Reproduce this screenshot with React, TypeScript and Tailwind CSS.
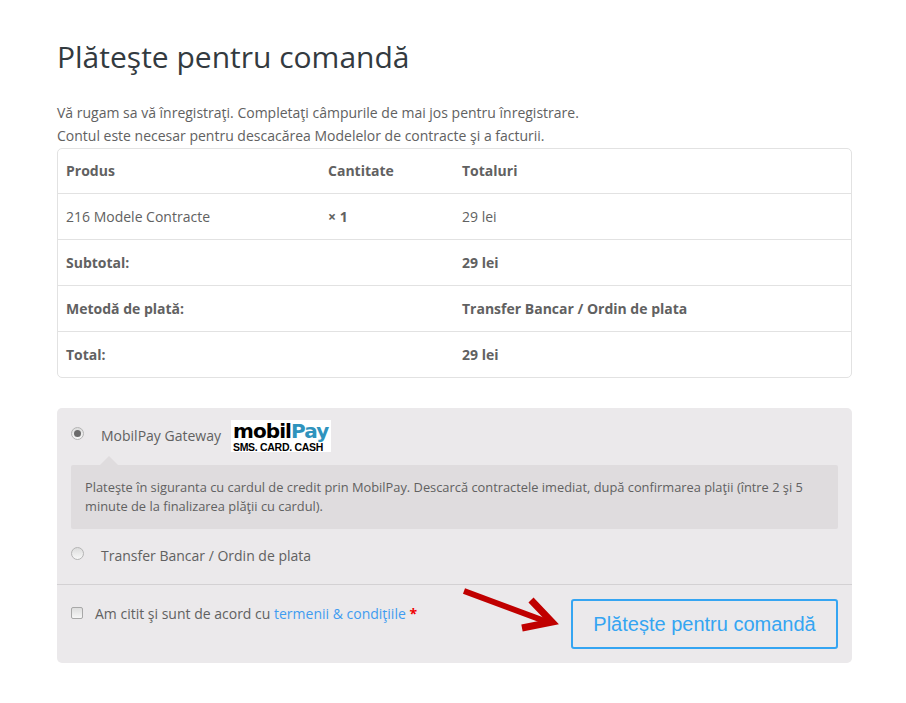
const rows = [
  { first: "Produs", second: "Cantitate", third: "Totaluri", bold: true, secondBold: true },
  { first: "216 Modele Contracte", second: "× 1", third: "29 lei", bold: false, secondBold: true },
  { first: "Subtotal:", second: "", third: "29 lei", bold: true, secondBold: false },
  { first: "Metodă de plată:", second: "", third: "Transfer Bancar / Ordin de plata", bold: true, secondBold: false },
  { first: "Total:", second: "", third: "29 lei", bold: true, secondBold: false }
];

const Radio = ({ checked }: { checked?: boolean }) => (
  <span className="mb-[4px] flex h-[13px] w-[13px] items-center justify-center rounded-full border border-[#b4b4b4] bg-gradient-to-b from-[#dcdcdc] to-[#f8f8f8]">
    {checked ? <span className="h-[7px] w-[7px] rounded-full bg-[#6b6b6b]" /> : null}
  </span>
);

const MobilPayLogo = () => (
  <div className="flex h-[32px] w-[100px] flex-col bg-white pl-[2px] font-bold">
    <div className="h-[22px] font-['DejaVu_Sans',sans-serif] text-[20px] leading-[22px] tracking-[-0.9px]">
      <span className="text-black">mobil</span>
      <span className="text-[#2f93bd]">Pay</span>
    </div>
    <div className="font-['Liberation_Sans',Arial,sans-serif] text-[10.5px] leading-[10px] tracking-[-0.3px] text-black">SMS. CARD. CASH</div>
  </div>
);

export default function App() {
  return (
    <div className="min-h-[703px] bg-white pl-[57px] pr-[54px] pt-[37px] font-['Open_Sans',sans-serif] text-[14px] text-[#616161]">
      <h1 className="h-[40px] text-[30px] leading-[40px] text-[#333a40]">Plăteşte pentru comandă</h1>
      <div className="mt-[24px] leading-[23px]">
        <p>Vă rugam sa vă înregistraţi. Completaţi câmpurile de mai jos pentru înregistrare.</p>
        <p>Contul este necesar pentru descacărea Modelelor de contracte şi a facturii.</p>
      </div>

      <div className="mt-[1px] rounded-[5px] border border-[#e2e2e2]">
        {rows.map((row, index) => (
          <div
            key={row.first}
            className={`grid grid-cols-[262px_134px_1fr] items-center pl-[8px] ${index > 0 ? "h-[46px] border-t border-[#e2e2e2]" : "h-[44px] pb-[2px]"}`}
          >
            <div className={row.bold ? "font-bold" : ""}>{row.first}</div>
            <div className={row.secondBold ? "font-bold" : ""}>{row.second}</div>
            <div className={row.bold ? "font-bold" : ""}>{row.third}</div>
          </div>
        ))}
      </div>

      <div className="mt-[30px] h-[255px] rounded-[5px] bg-[#ebe9eb]">
        <div className="flex h-[57px] items-center pb-[2px] pl-[14px]">
          <Radio checked />
          <span className="ml-[17px]">MobilPay Gateway</span>
          <div className="ml-[10px]">
            <MobilPayLogo />
          </div>
        </div>
        <div className="relative mx-[14px] h-[64px] rounded-[2px] bg-[#dfdcde] px-[14px] pt-[13px] text-[12.85px] leading-[19px]">
          <span className="absolute left-[29px] top-[-9px] h-0 w-0 border-x-[9px] border-b-[9px] border-x-transparent border-b-[#dfdcde]" />
          Plateşte în siguranta cu cardul de credit prin MobilPay. Descarcă contractele imediat, după confirmarea plaţii (între 2 şi 5 minute de la finalizarea plăţii cu cardul).
        </div>
        <div className="flex h-[55px] items-center pb-[3px] pl-[14px]">
          <Radio />
          <span className="ml-[17px]">Transfer Bancar / Ordin de plata</span>
        </div>
        <div className="relative flex border-t border-[#d3d1d3] pl-[14px] pr-[14px] pt-[14px]">
          <div className="flex h-[28px] flex-1 items-center">
            <span className="h-[12px] w-[12px] rounded-[2px] border border-[#a8a8a8] bg-gradient-to-b from-[#dedede] to-[#f6f6f6]" />
            <span className="ml-[12px]">
              Am citit şi sunt de acord cu <span className="text-[#3f9cf0]">termenii &amp; condiţiile</span>{" "}
              <span className="font-bold text-[#f00000]">*</span>
            </span>
          </div>
          <button className="h-[50px] w-[267px] rounded-[3px] border-2 border-[#35a5f2] font-['Liberation_Sans',Arial,sans-serif] text-[20px] text-[#35a5f2]">
            Plătește pentru comandă
          </button>
          <svg className="absolute left-[405px] top-[3px]" width="100" height="46" viewBox="0 0 100 46">
            <path d="M2 3 L88 35" stroke="#c00000" strokeWidth="6" fill="none" />
            <path d="M69 12 L90 34 L60 40" stroke="#c00000" strokeWidth="7" fill="none" />
          </svg>
        </div>
      </div>
    </div>
  );
}
